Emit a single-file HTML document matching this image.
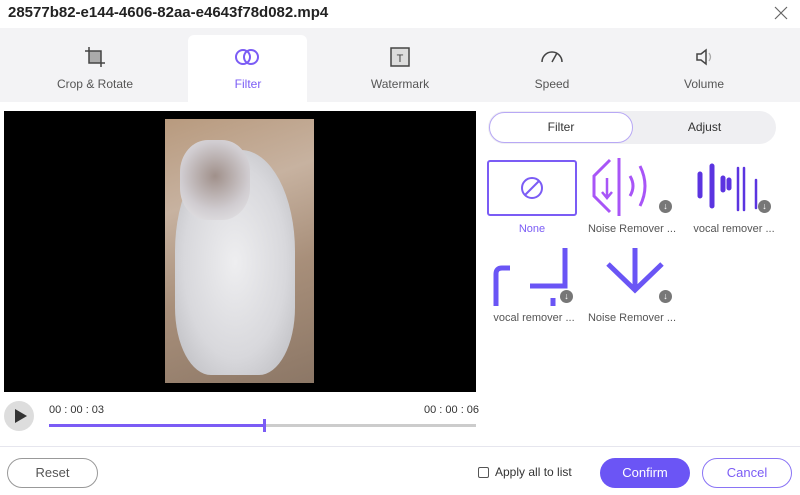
<!DOCTYPE html>
<html><head><meta charset="utf-8"><style>
*{margin:0;padding:0;box-sizing:border-box}
body{width:800px;height:495px;overflow:hidden;background:#fff;font-family:"Liberation Sans",sans-serif;position:relative;color:#333}
.a{position:absolute}
.tabbar{left:0;top:28px;width:800px;height:74px;background:#f3f3f5}
.tab{position:absolute;top:46px;width:120px;text-align:center;font-size:12px;color:#555}
.tab .l{position:absolute;top:31px;left:0;width:100%}
.btn{position:absolute;border-radius:16px;font-size:13px;text-align:center;line-height:28px;height:30px}
.cell{position:absolute;width:90px;height:56px}
.lab{position:absolute;font-size:11px;color:#555;width:100px;text-align:center}
.dl{position:absolute;width:13px;height:13px;border-radius:50%;background:#777;color:#fff;font-size:9px;line-height:13px;text-align:center}
</style></head><body>
<div class="a" style="left:8px;top:4px;font-size:15px;font-weight:bold;color:#222">28577b82-e144-4606-82aa-e4643f78d082.mp4</div>
<svg class="a" style="left:774px;top:6px" width="14" height="14"><path d="M1 1L13 13M13 1L1 13" stroke="#666" stroke-width="1.2"/></svg>
<div class="a tabbar"></div>
<div class="a" style="left:188px;top:35px;width:119px;height:68px;background:#fff;border-radius:6px 6px 0 0"></div>
<div class="tab" style="left:35px"><svg width="22" height="22" style="position:absolute;left:49px;top:0"><rect x="5" y="5" width="12" height="12" fill="#aaa" stroke="#444" stroke-width="1.5"/><path d="M5 1V5M1 5H5M17 17V21M17 17H21" stroke="#444" stroke-width="1.5"/></svg><div class="l">Crop &amp; Rotate</div></div>
<div class="tab" style="left:188px"><svg width="26" height="22" style="position:absolute;left:46px;top:0"><circle cx="9" cy="11" r="7" fill="none" stroke="#7b5cf5" stroke-width="2"/><circle cx="17" cy="11" r="7" fill="none" stroke="#7b5cf5" stroke-width="2"/></svg><div class="l" style="color:#7b5cf5">Filter</div></div>
<div class="tab" style="left:340px"><svg width="22" height="22" style="position:absolute;left:49px;top:0"><rect x="2" y="2" width="18" height="18" fill="#ddd" stroke="#444" stroke-width="1.5"/><text x="11" y="16" font-size="11" text-anchor="middle" fill="#444" font-family="Liberation Sans">T</text></svg><div class="l">Watermark</div></div>
<div class="tab" style="left:492px"><svg width="26" height="22" style="position:absolute;left:47px;top:0"><path d="M3 16A10 10 0 0 1 23 16" fill="none" stroke="#444" stroke-width="1.5"/><path d="M13 16L18 7" stroke="#444" stroke-width="1.5"/></svg><div class="l">Speed</div></div>
<div class="tab" style="left:644px"><svg width="22" height="22" style="position:absolute;left:49px;top:0"><path d="M4 8H8L13 4V18L8 14H4Z" fill="none" stroke="#444" stroke-width="1.5"/><path d="M16 7Q19 11 16 15" fill="none" stroke="#aaa" stroke-width="1.3"/></svg><div class="l">Volume</div></div>

<div class="a" style="left:4px;top:111px;width:472px;height:281px;background:#000"></div>
<div class="a" style="left:165px;top:119px;width:149px;height:264px;background:linear-gradient(160deg,#b89a7e 0%,#c7b2a0 30%,#a88f7a 60%,#8c7766 100%)"></div>
<div class="a" style="left:175px;top:150px;width:120px;height:225px;border-radius:45% 45% 30% 30%;background:radial-gradient(ellipse at 50% 50%,#eeeef0 0%,#d8d8dc 60%,#b8b8bc 100%)"></div>
<div class="a" style="left:180px;top:140px;width:70px;height:80px;border-radius:40%;background:radial-gradient(circle at 50% 45%,#a0908a 0%,#d0ccd0 60%,#e8e8ea 100%)"></div>

<div class="a" style="left:4px;top:401px;width:30px;height:30px;border-radius:50%;background:#ddd"></div>
<svg class="a" style="left:12px;top:407px" width="16" height="18"><path d="M3 2L15 9L3 16Z" fill="#333"/></svg>
<div class="a" style="left:49px;top:404px;font-size:11px;color:#333">00 : 00 : 03</div>
<div class="a" style="left:424px;top:404px;font-size:11px;color:#333">00 : 00 : 06</div>
<div class="a" style="left:49px;top:424px;width:427px;height:3px;background:#ccc"></div>
<div class="a" style="left:49px;top:424px;width:216px;height:3px;background:#7b5cf5"></div>
<div class="a" style="left:263px;top:419px;width:3px;height:13px;background:#7b5cf5"></div>

<div class="a" style="left:488px;top:111px;width:288px;height:33px;border-radius:17px;background:#efeff2"></div>
<div class="a" style="left:489px;top:112px;width:144px;height:31px;border-radius:16px;background:#fff;border:1px solid #b8a8f5;text-align:center;line-height:29px;font-size:12px">Filter</div>
<div class="a" style="left:633px;top:112px;width:143px;height:31px;text-align:center;line-height:31px;font-size:12px">Adjust</div>

<div class="a" style="left:487px;top:160px;width:90px;height:56px;border:2px solid #7b5cf5;border-radius:3px"></div>
<svg class="a" style="left:519px;top:175px" width="26" height="26"><circle cx="13" cy="13" r="10" fill="none" stroke="#7b5cf5" stroke-width="2"/><path d="M6 20L20 6" stroke="#7b5cf5" stroke-width="2"/></svg>
<div class="lab" style="left:482px;top:223px;color:#7b5cf5">None</div>

<svg class="a" style="left:588px;top:158px" width="80" height="58"><path d="M22 2L6 18V38L22 54" fill="none" stroke="#a855f7" stroke-width="3"/><path d="M31 0V58" stroke="#a855f7" stroke-width="3"/><path d="M42 18Q48 28 42 38M52 8Q62 28 52 48" fill="none" stroke="#a855f7" stroke-width="3"/><path d="M19 20V40M14 34L19 40L24 34" fill="none" stroke="#a855f7" stroke-width="2.5"/></svg>
<div class="dl" style="left:659px;top:200px">↓</div>
<div class="lab" style="left:582px;top:223px">Noise Remover ...</div>

<svg class="a" style="left:694px;top:160px" width="80" height="56"><g stroke="#5b34e0" stroke-linecap="round"><path d="M6 14V36M18 6V46M29 18V30M35 20V28" stroke-width="5"/><path d="M44 8V50M50 8V50M62 20V48" stroke-width="2.5"/></g></svg>
<div class="dl" style="left:758px;top:200px">↓</div>
<div class="lab" style="left:684px;top:223px">vocal remover ...</div>

<svg class="a" style="left:490px;top:248px" width="80" height="58"><path d="M6 58V26Q6 20 12 20H20M75 0V38H40M63 50V58" fill="none" stroke="#6a55f5" stroke-width="5"/></svg>
<div class="dl" style="left:560px;top:290px">↓</div>
<div class="lab" style="left:484px;top:312px">vocal remover ...</div>

<svg class="a" style="left:600px;top:248px" width="70" height="50"><path d="M35 0V40M8 16L35 42L62 16" fill="none" stroke="#6a55f5" stroke-width="5"/></svg>
<div class="dl" style="left:659px;top:290px">↓</div>
<div class="lab" style="left:582px;top:312px">Noise Remover ...</div>

<div class="a" style="left:0;top:446px;width:800px;height:1px;background:#e6e6ee"></div>
<div class="btn" style="left:7px;top:458px;width:91px;border:1px solid #999;color:#555">Reset</div>
<div class="a" style="left:478px;top:467px;width:11px;height:11px;border:1px solid #555;border-radius:2px"></div>
<div class="a" style="left:495px;top:465px;font-size:12px;color:#333">Apply all to list</div>
<div class="btn" style="left:600px;top:458px;width:90px;background:#6b55f5;color:#fff;line-height:30px">Confirm</div>
<div class="btn" style="left:702px;top:458px;width:90px;border:1px solid #8a74f5;color:#7b5cf5">Cancel</div>
</body></html>
